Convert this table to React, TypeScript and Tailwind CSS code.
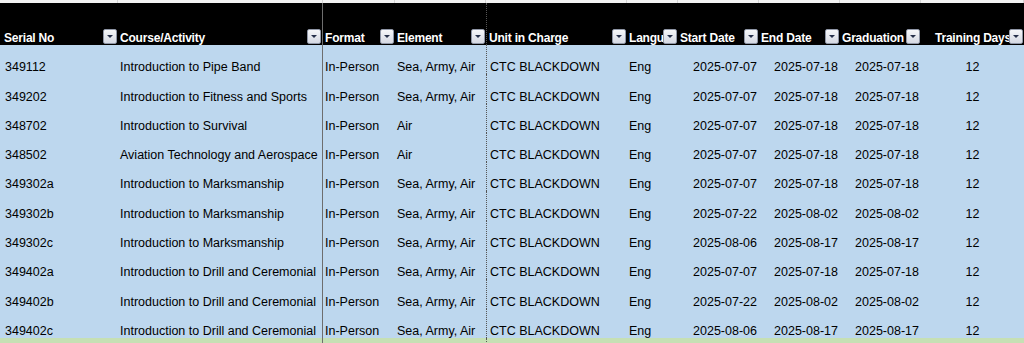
import React from 'react'

const cols = "grid grid-cols-[118px_204px_73px_91px_141px_51px_81px_81px_81px_1fr]"

const headers = [
  { label: "Serial No" },
  { label: "Course/Activity" },
  { label: "Format" },
  { label: "Element" },
  { label: "Unit in Charge" },
  { label: "Language" },
  { label: "Start Date" },
  { label: "End Date" },
  { label: "Graduation" },
  { label: "Training Days", center: true },
]

const rows = [
  ["349112", "Introduction to Pipe Band", "In-Person", "Sea, Army, Air", "2025-07-07", "2025-07-18", "2025-07-18"],
  ["349202", "Introduction to Fitness and Sports", "In-Person", "Sea, Army, Air", "2025-07-07", "2025-07-18", "2025-07-18"],
  ["348702", "Introduction to Survival", "In-Person", "Air", "2025-07-07", "2025-07-18", "2025-07-18"],
  ["348502", "Aviation Technology and Aerospace", "In-Person", "Air", "2025-07-07", "2025-07-18", "2025-07-18"],
  ["349302a", "Introduction to Marksmanship", "In-Person", "Sea, Army, Air", "2025-07-07", "2025-07-18", "2025-07-18"],
  ["349302b", "Introduction to Marksmanship", "In-Person", "Sea, Army, Air", "2025-07-22", "2025-08-02", "2025-08-02"],
  ["349302c", "Introduction to Marksmanship", "In-Person", "Sea, Army, Air", "2025-08-06", "2025-08-17", "2025-08-17"],
  ["349402a", "Introduction to Drill and Ceremonial", "In-Person", "Sea, Army, Air", "2025-07-07", "2025-07-18", "2025-07-18"],
  ["349402b", "Introduction to Drill and Ceremonial", "In-Person", "Sea, Army, Air", "2025-07-22", "2025-08-02", "2025-08-02"],
  ["349402c", "Introduction to Drill and Ceremonial", "In-Person", "Sea, Army, Air", "2025-08-06", "2025-08-17", "2025-08-17"],
]

// vertical rules that run down the whole sheet
const edge = (i: number) =>
  i === 2 ? "border-l border-[#6e6e6e]" : i === 4 ? "border-l border-dotted border-[#555]" : ""

function FilterButton() {
  return (
    <span className="mb-[1px] flex h-[15px] w-[14px] shrink-0 items-center justify-center rounded-[2px] border border-[#8f96a6] bg-linear-to-b from-[#f6f7f9] to-[#d5d9e3]">
      <svg width="8" height="5" viewBox="0 0 8 5">
        <path d="M1 1h6L4 4z" fill="#26304a" />
      </svg>
    </span>
  )
}

export default function App() {
  return (
    <div className="h-[343px] w-[1024px] overflow-hidden bg-white text-[12.5px] text-black" style={{ fontFamily: "'Liberation Sans', Arial, sans-serif" }}>
      {/* cut off row above the table */}
      <div className={`${cols} h-[3px]`}>
        {headers.map((h, i) => (
          <div key={i} className={`bg-[#f2f2f2] ${i === 2 ? "border-l border-[#6e6e6e]" : ""} ${i === 1 ? "" : "border-r border-[#d4d4d4]"}`} />
        ))}
      </div>

      {/* header */}
      <div className={`${cols} h-[42px] bg-black text-[12px] font-bold tracking-[-0.2px] text-white`}>
        {headers.map((h, i) => (
          <div key={i} className={`relative flex items-end pr-[1px] ${edge(i)} ${i === 0 ? "pl-[4px]" : "pl-[2px]"}`}>
            {h.center ? (
              <>
                <span className="flex-1 overflow-hidden whitespace-nowrap text-center leading-[14px]">{h.label}</span>
                <span className="absolute bottom-0 right-[1px] flex"><FilterButton /></span>
              </>
            ) : (
              <>
                <span className="flex-1 overflow-hidden whitespace-nowrap leading-[14px]">{h.label}</span>
                <FilterButton />
              </>
            )}
          </div>
        ))}
      </div>

      {/* data rows */}
      {rows.map((r, ri) => (
        <div key={ri} className={`${cols} h-[29.3px] bg-[#bdd7ee] leading-[14px]`}>
          <div className="flex items-end overflow-hidden whitespace-nowrap pl-[5px]">{r[0]}</div>
          <div className="flex items-end overflow-hidden whitespace-nowrap pl-[2px]">{r[1]}</div>
          <div className={`flex items-end overflow-hidden whitespace-nowrap pl-[2px] ${edge(2)}`}>{r[2]}</div>
          <div className="flex items-end overflow-hidden whitespace-nowrap pl-[2px]">{r[3]}</div>
          <div className={`flex items-end overflow-hidden whitespace-nowrap pl-[3px] ${edge(4)}`}>CTC BLACKDOWN</div>
          <div className="flex items-end pl-[2px]">Eng</div>
          <div className="flex items-end justify-end pr-[2px]">{r[4]}</div>
          <div className="flex items-end justify-end pr-[2px]">{r[5]}</div>
          <div className="flex items-end justify-end pr-[2px]">{r[6]}</div>
          <div className="flex items-end justify-center">12</div>
        </div>
      ))}

      {/* next row, green band */}
      <div className={`${cols} h-[8px] bg-[#c6e0b4]`}>
        {headers.map((h, i) => (
          <div key={i} className={edge(i)} />
        ))}
      </div>
    </div>
  )
}
